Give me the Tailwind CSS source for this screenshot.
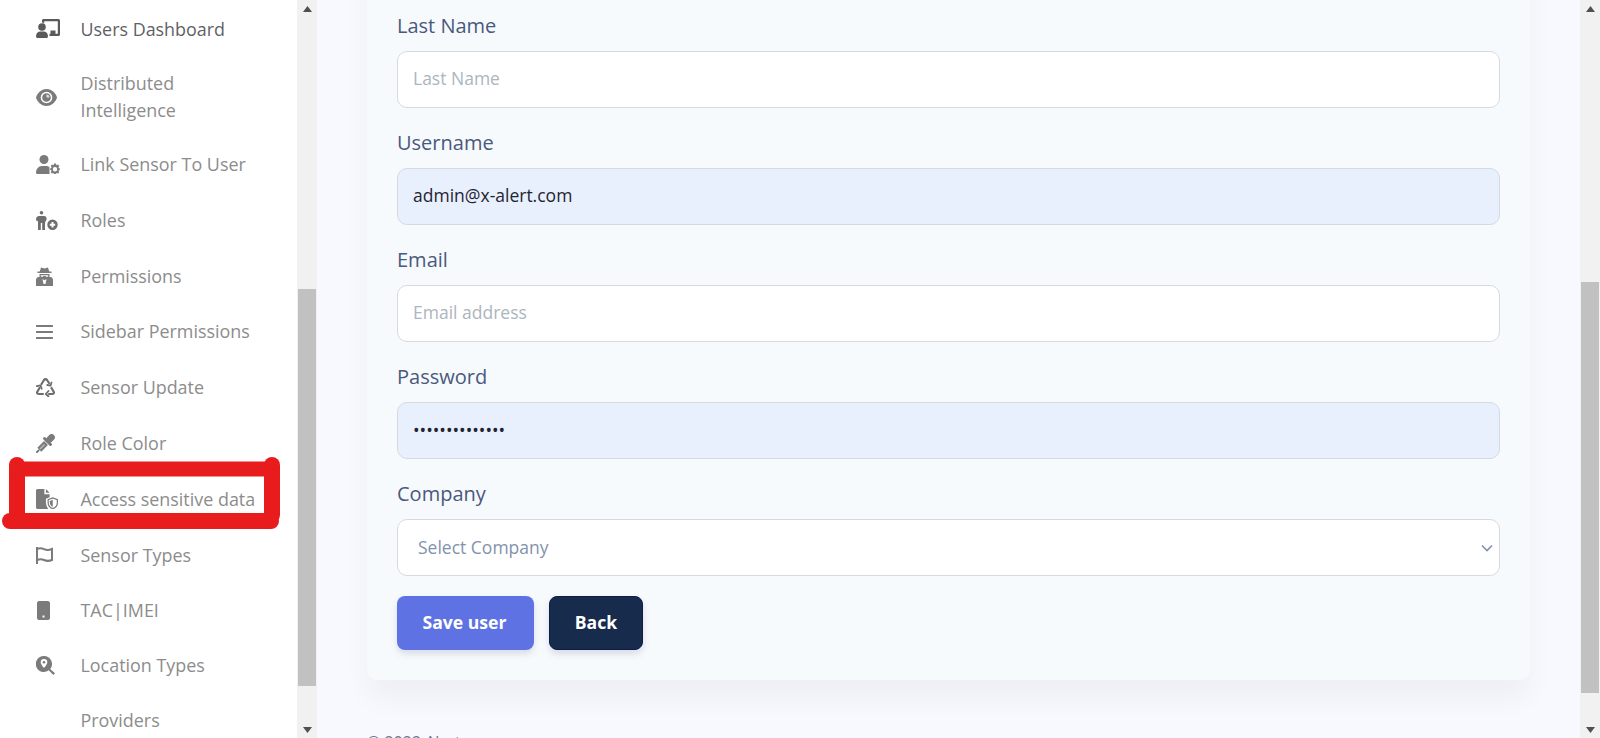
<!DOCTYPE html>
<html lang="en">
<head>
<meta charset="utf-8">
<title>Edit user</title>
<script src="https://cdn.jsdelivr.net/npm/@tailwindcss/browser@4"></script>
</head>
<body class="h-[738px] w-[1600px] overflow-hidden bg-[#f8f9fe] font-['Open_Sans',sans-serif]">
<div class="relative flex h-[738px] w-[1600px] overflow-hidden">

  <!-- Sidebar -->
  <aside class="h-[738px] w-[297px] shrink-0 overflow-hidden bg-white pl-[36px] text-[17.92px] leading-[27px] text-[#8c8c8c]">
    <nav class="flex flex-col">
      <a class="flex h-[57px] items-center pt-[2px] text-[#5f5f66]">
        <span class="flex w-[44.5px] shrink-0 text-[#5a5a5a]"><svg class="-mt-[2px] h-[19px] w-[24px]" viewBox="0 0 24 19" fill="currentColor"><path d="M6 3.500V1.500C6 .7 6.700 0 7.500 0H22.500C23.300 0 24 .7 24 1.500V15.500C24 16.300 23.300 17 22.500 17H13.500V14.800H21.800V2.200H8.200V4.500A5 5 0 0 0 6 3.500Z"/><path d="M14.500 11.500H19.500V15H14.500Z"/><circle cx="6" cy="8" r="3.800"/><path d="M0 17.200C0 14.500 2 12.500 4.500 12.500H7.500C10 12.500 12 14.500 12 17.200C12 18.300 11.300 19 10.300 19H1.700C.7 19 0 18.300 0 17.200Z"/></svg></span>
        <span>Users Dashboard</span>
      </a>
      <a class="flex h-[80px] items-center">
        <span class="flex w-[44.5px] shrink-0 text-[#7b7b7b]"><svg class="h-[17px] w-[21px]" viewBox="0 0 21 17"><path fill="currentColor" d="M10.500 0C16 0 20 4.800 21 8.500C20 12.200 16 17 10.500 17C5 17 1 12.200 0 8.500C1 4.800 5 0 10.500 0Z"/><circle cx="10.500" cy="8.500" r="5.800" fill="#fff"/><circle cx="10.500" cy="8.500" r="4.300" fill="currentColor"/><path fill="#fff" d="M10.500 5.500A3 3 0 0 1 13.500 8.500H10.500Z" opacity=".75"/></svg></span>
        <span class="w-[130px]">Distributed Intelligence</span>
      </a>
      <a class="flex h-[55px] items-center">
        <span class="flex w-[44.5px] shrink-0 text-[#7b7b7b]"><svg class="h-[19px] w-[24px]" viewBox="0 0 24 19" fill="currentColor"><circle cx="8" cy="4.500" r="4.500"/><path d="M0 17.500C0 14 2.500 11 6 11H10C11.500 11 12.500 11.400 13.500 12.200V19H1.500C.5 19 0 18.300 0 17.500Z"/><path fill-rule="evenodd" d="M18 8.500H20L20.400 10.200L22 9.500L23.300 11L22.300 12.500L23.800 13.500V15L22.300 15.700L23.300 17.200L22 18.600L20.400 18L20 19H18L17.600 18L16 18.600L14.700 17.200L15.700 15.700L14.200 15V13.500L15.700 12.500L14.700 11L16 9.500L17.600 10.200ZM19 12A2.200 2.200 0 1 0 19 16.400A2.200 2.200 0 0 0 19 12Z"/></svg></span>
        <span>Link Sensor To User</span>
      </a>
      <a class="flex h-[56px] items-center">
        <span class="flex w-[44.5px] shrink-0 text-[#6e6e6e]"><svg class="h-[19px] w-[22px]" viewBox="0 0 22 19" fill="currentColor"><circle cx="5.500" cy="1.800" r="1.800"/><path d="M3 5H8C9.500 5 10.500 5.800 10.500 7V9C9.500 10 9 11.500 9 13V19H6.200V12H4.800V19H2V9.500L.8 10.500L0 8.500C0 6.500 1.200 5 3 5Z"/><path fill-rule="evenodd" d="M16.500 8.500A5.200 5.200 0 1 1 16.500 18.900A5.200 5.200 0 0 1 16.500 8.500ZM15.500 11V12.700H13.800V14.700H15.500V16.400H17.500V14.700H19.200V12.700H17.500V11Z"/></svg></span>
        <span>Roles</span>
      </a>
      <a class="flex h-[56px] items-center">
        <span class="flex w-[44.5px] shrink-0 text-[#7b7b7b]"><svg class="h-[19px] w-[17px]" viewBox="0 0 17 19" fill="currentColor"><path d="M5 0.500L8.500 1.500L12 0.500L13.200 4.500H15.500V6H1.500V4.500H3.800Z"/><path fill-rule="evenodd" d="M3.500 7H13.500V10H14.500C16 10 17 11.500 17 13V19H0V13C0 11.500 1 10 2.500 10H3.500ZM4.800 8.200V9.500C5.500 10 7 10 7.500 9H9.500C10 10 11.500 10 12.200 9.500V8.200ZM6.500 12L7.500 17H9.500L10.500 12L8.500 13.200Z"/></svg></span>
        <span>Permissions</span>
      </a>
      <a class="flex h-[55px] items-center">
        <span class="flex w-[44.5px] shrink-0 text-[#7b7b7b]"><svg class="h-[14px] w-[17px]" viewBox="0 0 17 14" fill="currentColor"><rect width="17" height="2" rx=".5"/><rect y="6" width="17" height="2" rx=".5"/><rect y="12" width="17" height="2" rx=".5"/></svg></span>
        <span>Sidebar Permissions</span>
      </a>
      <a class="flex h-[56px] items-center">
        <span class="flex w-[44.5px] shrink-0 text-[#6e6e6e]"><svg class="h-[19px] w-[19px]" viewBox="0 0 19 19" fill="none" stroke="currentColor" stroke-width="2.200" stroke-linecap="round" stroke-linejoin="round"><path d="M5.500 6L8 2C8.800 .9 10.200 .9 11 2L13 5"/><path d="M15.500 4.500L14.500 7.700L11.300 7" stroke-width="1.800"/><path d="M15.500 10L17.700 13.800C18.300 15 17.500 16 16.200 16H13"/><path d="M12.500 13L9.800 16L12.500 18.500" stroke-width="1.800"/><path d="M7 16H3C1.500 16 .7 15 1.300 13.800L3.500 10"/><path d="M.8 8.200L4.500 7.300L5.700 10.700" stroke-width="1.800"/></svg></span>
        <span>Sensor Update</span>
      </a>
      <a class="flex h-[56px] items-center">
        <span class="flex w-[44.5px] shrink-0 text-[#7b7b7b]"><svg class="h-[19px] w-[19px]" viewBox="0 0 19 19" fill="none" stroke="currentColor"><path stroke-width="6.500" stroke-linecap="round" d="M13 6L15.600 3.400"/><path stroke-width="3" stroke-linecap="round" d="M8.500 4.500L14.500 10.500"/><path stroke-width="5.500" d="M3.300 15.700L10 9"/><path stroke="#fff" stroke-width="1.300" opacity=".5" d="M4 15L8.500 10.500"/><path stroke-width="2" stroke-linecap="round" d="M1 18L2.500 16.500"/></svg></span>
        <span>Role Color</span>
      </a>
      <a class="flex h-[56px] items-center">
        <span class="flex w-[44.5px] shrink-0 text-[#7b7b7b]"><svg class="h-[20px] w-[22px]" viewBox="0 0 21 19" fill="currentColor"><path d="M1.500 0H8V5H13V7.800L9.500 9.300V12.500C9.500 14.800 10.300 17 11.800 19H1.500C.7 19 0 18.300 0 17.500V1.500C0 .7 .7 0 1.500 0ZM9.500 0L13 3.500H9.500Z"/><path fill="none" stroke="currentColor" stroke-width="1.200" d="M16 8.500L20.400 10.200V13C20.400 15.500 18.700 17.700 16 18.700C13.300 17.700 11.600 15.500 11.600 13V10.200Z"/><path d="M16 10.300V17C14.300 16.200 13.200 14.800 13.200 13V11.300Z"/></svg></span>
        <span>Access sensitive data</span>
      </a>
      <a class="flex h-[57px] items-center">
        <span class="flex w-[44.5px] shrink-0 text-[#7b7b7b]"><svg class="h-[17px] w-[17px]" viewBox="0 0 17 17" fill="none" stroke="currentColor" stroke-width="2"><path d="M1 0V17"/><path d="M1 2C4 .8 6 1.200 8 2.200C10.500 3.400 13 3.400 16 2V13C13 14.200 10.500 14.200 8 13C6 12 4 11.700 1 13"/></svg></span>
        <span>Sensor Types</span>
      </a>
      <a class="flex h-[53px] items-center">
        <span class="flex w-[44.5px] shrink-0 pl-[1px] text-[#7b7b7b]"><svg class="h-[19px] w-[13px]" viewBox="0 0 13 19"><path fill="currentColor" fill-rule="evenodd" d="M2 0H11C12 0 13 1 13 2V17C13 18 12 19 11 19H2C1 19 0 18 0 17V2C0 1 1 0 2 0ZM5.500 14.500V16.500H7.500V14.500Z"/></svg></span>
        <span>TAC|IMEI</span>
      </a>
      <a class="flex h-[57px] items-center">
        <span class="flex w-[44.5px] shrink-0 text-[#7b7b7b]"><svg class="h-[19px] w-[19px]" viewBox="0 0 19 19"><path fill="currentColor" fill-rule="evenodd" d="M8 0A8 8 0 0 1 14.200 13L19 17.300L17.300 19L12.700 14.300A8 8 0 1 1 8 0ZM8 3A3.300 3.300 0 0 0 4.700 6.300C4.700 8.500 8 12 8 12C8 12 11.300 8.500 11.300 6.300A3.300 3.300 0 0 0 8 3Z"/><circle cx="8" cy="6.300" r="1.300" fill="currentColor"/></svg></span>
        <span>Location Types</span>
      </a>
      <a class="flex h-[53px] items-center">
        <span class="w-[44.5px] shrink-0"></span>
        <span>Providers</span>
      </a>
    </nav>
  </aside>

  <!-- Sidebar scrollbar -->
  <div class="flex h-[738px] w-[20px] shrink-0 flex-col bg-[#f1f1f1] px-[1px]">
    <div class="flex h-[17px] items-center justify-center"><svg class="h-[6px] w-[9px] text-[#505050]" viewBox="0 0 9 6" fill="currentColor"><path d="M4.500 0L9 6H0Z"/></svg></div>
    <div class="mt-[272px] h-[397px] bg-[#c1c1c1]"></div>
    <div class="mt-auto flex h-[17px] items-center justify-center"><svg class="h-[6px] w-[9px] text-[#505050]" viewBox="0 0 9 6" fill="currentColor"><path d="M0 0H9L4.500 6Z"/></svg></div>
  </div>

  <!-- Main -->
  <main class="h-[738px] w-[1263px] shrink-0 overflow-hidden px-[50px]">
    <section class="-mt-[60px] h-[740px] w-[1163px] rounded-b-[10px] bg-[#f7fafd] px-[30px] pt-[71px] shadow-[0_20px_27px_rgba(0,0,0,0.04)]">
      <label class="mb-[10px] block text-[20px] leading-[30px] text-[#49597c]">Last Name</label>
      <div class="flex h-[57px] items-center rounded-[10px] border border-[#d6dae0] bg-white px-[15px] pb-[2px] text-[17.5px] text-[#adb5bd]">Last Name</div>

      <label class="mb-[10px] mt-[20px] block text-[20px] leading-[30px] text-[#49597c]">Username</label>
      <div class="flex h-[57px] items-center rounded-[10px] border border-[#d6dae0] bg-[#e8f0fe] px-[15px] pb-[2px] text-[17.5px] text-[#1f2430]">admin@x-alert.com</div>

      <label class="mb-[10px] mt-[20px] block text-[20px] leading-[30px] text-[#49597c]">Email</label>
      <div class="flex h-[57px] items-center rounded-[10px] border border-[#d6dae0] bg-white px-[15px] pb-[2px] text-[17.5px] text-[#adb5bd]">Email address</div>

      <label class="mb-[10px] mt-[20px] block text-[20px] leading-[30px] text-[#49597c]">Password</label>
      <div class="flex h-[57px] items-center rounded-[10px] border border-[#d6dae0] bg-[#e8f0fe] px-[15px] text-[17.5px] text-[#1f2430]">••••••••••••••</div>

      <label class="mb-[10px] mt-[20px] block text-[20px] leading-[30px] text-[#49597c]">Company</label>
      <div class="flex h-[57px] items-center justify-between rounded-[10px] border border-[#d6dae0] bg-white pl-[20px] pr-[6px] text-[17.5px] text-[#8392ab]">
        <span>Select Company</span>
        <svg class="h-[8px] w-[12px]" viewBox="0 0 12 8" fill="none" stroke="currentColor" stroke-width="1.600"><path d="M1 1.500L6 6.500L11 1.500"/></svg>
      </div>

      <div class="mt-[20px] flex gap-[15px]">
        <button class="h-[54px] w-[137px] rounded-[8px] bg-[#5e72e4] pb-[2px] pr-[2px] text-[17.6px] font-bold text-white shadow-[0_4px_7px_rgba(50,50,93,0.15)]">Save user</button>
        <button class="h-[54px] w-[94px] rounded-[8px] border border-[#0f1c48] bg-[#172b4d] pb-[2px] text-[17.6px] font-bold text-white shadow-[0_4px_7px_rgba(50,50,93,0.15)]">Back</button>
      </div>
    </section>
    <p class="mt-[50px] text-[16px] leading-[24px] text-[#67748e]">© 2022 Alert</p>
  </main>

  <!-- Page scrollbar -->
  <div class="flex h-[738px] w-[20px] shrink-0 flex-col bg-[#f1f1f1] px-[1px]">
    <div class="flex h-[17px] items-center justify-center"><svg class="h-[6px] w-[9px] text-[#505050]" viewBox="0 0 9 6" fill="currentColor"><path d="M4.500 0L9 6H0Z"/></svg></div>
    <div class="mt-[265px] h-[411px] bg-[#c1c1c1]"></div>
    <div class="mt-auto flex h-[17px] items-center justify-center"><svg class="h-[6px] w-[9px] text-[#505050]" viewBox="0 0 9 6" fill="currentColor"><path d="M0 0H9L4.500 6Z"/></svg></div>
  </div>

  <!-- Red hand-drawn annotation -->
  <svg class="pointer-events-none absolute left-0 top-0 h-[738px] w-[300px]" viewBox="0 0 300 738" fill="none" stroke="#e81c1c" stroke-linecap="round" stroke-linejoin="round">
    <path stroke-width="16" d="M17 465V515"/>
    <path stroke-width="15" d="M17 469H272"/>
    <path stroke-width="16" d="M272 465V515"/>
    <path stroke-width="16" d="M10 521H271"/>
  </svg>
</div>
</body>
</html>
